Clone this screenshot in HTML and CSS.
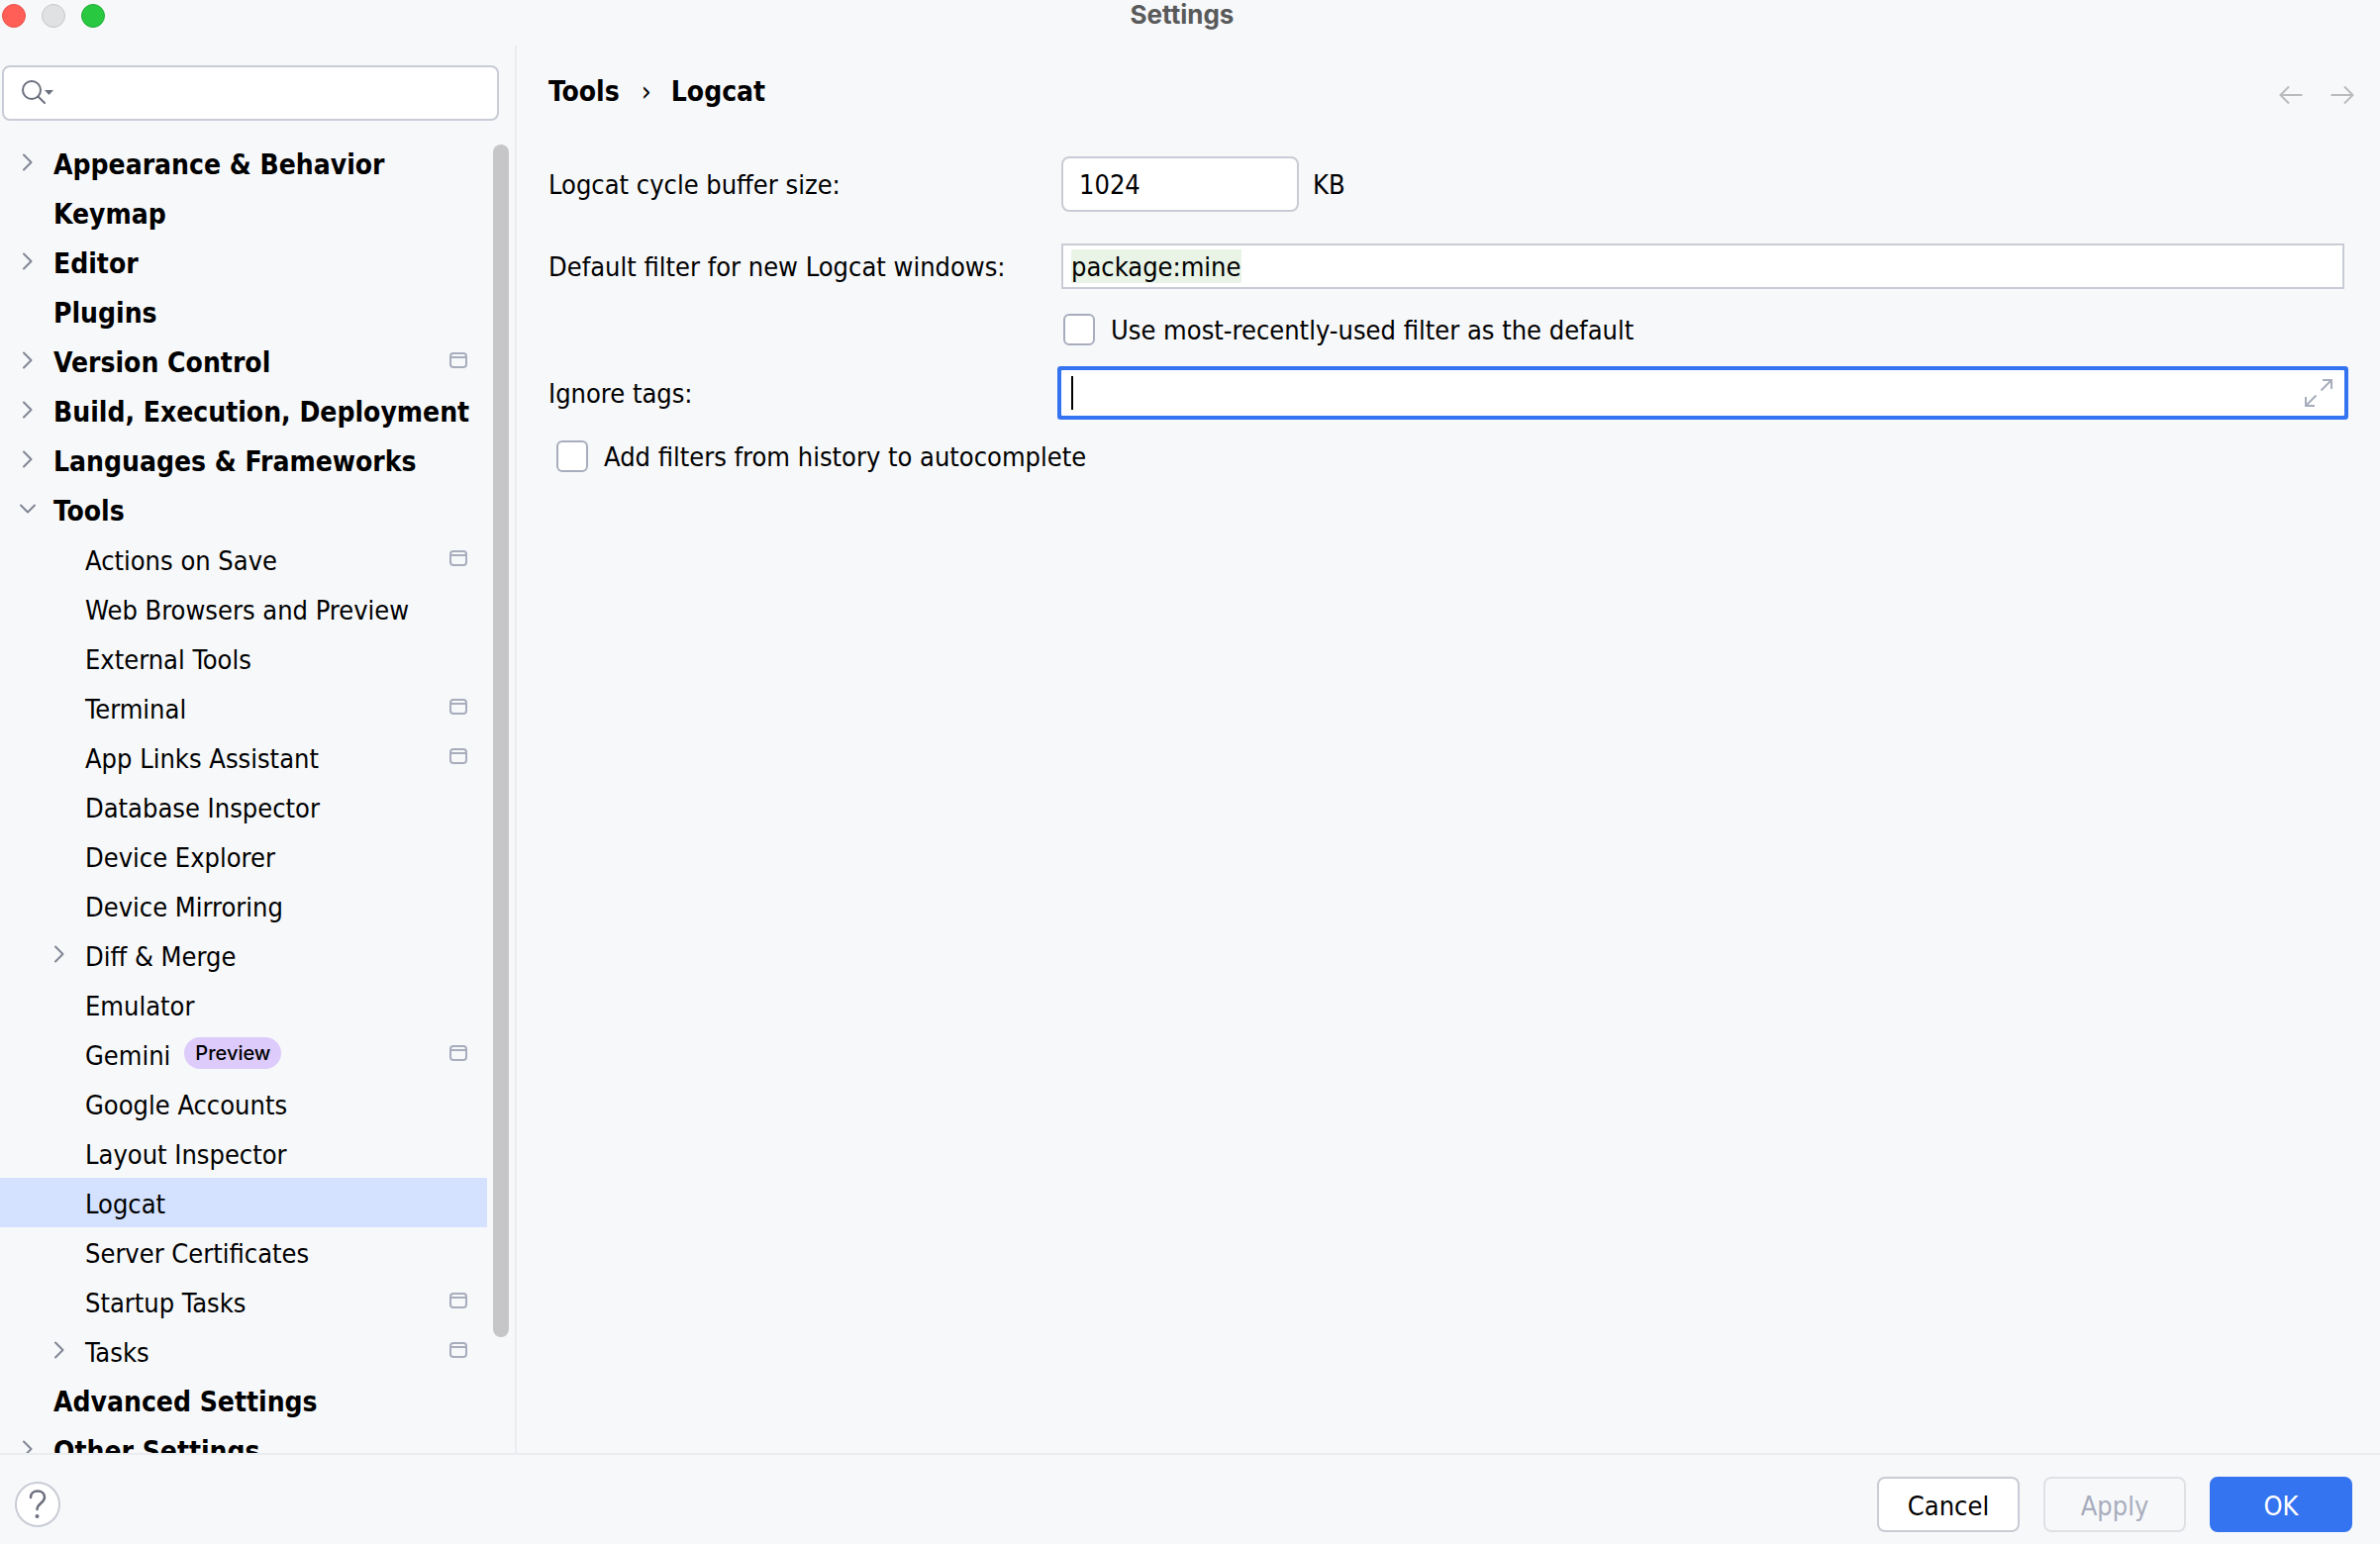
FILE: index.html
```html
<!DOCTYPE html>
<html lang="en">
<head>
<meta charset="utf-8">
<title>Settings</title>
<link rel="stylesheet" href="styles.css">
</head>
<body>
<svg class="sprite" aria-hidden="true">
  <symbol id="chevron-right" viewBox="0 0 32 32"><path d="M12 8.500 19.500 16l-7.500 7.500" fill="none" stroke="#818594" stroke-width="2" stroke-linecap="round" stroke-linejoin="round"/></symbol>
  <symbol id="chevron-down" viewBox="0 0 32 32"><path d="M9 12.500 16 19.500l7-7" fill="none" stroke="#818594" stroke-width="2" stroke-linecap="round" stroke-linejoin="round"/></symbol>
  <symbol id="project" viewBox="0 0 18 16"><rect x="1" y="1" width="16" height="14" rx="3" fill="none" stroke="#a8adbd" stroke-width="2"/><path d="M1 5h16" stroke="#a8adbd" stroke-width="2"/></symbol>
</svg>
<div class="window">
  <header class="titlebar">
    <div class="lights">
      <button class="light close" aria-label="Close"></button>
      <button class="light minimize" aria-label="Minimize"></button>
      <button class="light zoom" aria-label="Zoom"></button>
    </div>
    <h1 class="title">Settings</h1>
  </header>

  <div class="body">
    <aside class="sidebar">
      <label class="search">
        <svg class="search-icon" width="36" height="32" viewBox="0 0 36 32" aria-hidden="true"><circle cx="12" cy="12" r="9" fill="none" stroke="#6c707e" stroke-width="2"/><path d="m18.500 18.500 6.500 6.500" stroke="#6c707e" stroke-width="2" stroke-linecap="round"/><path d="M25 12h9l-4.500 5z" fill="#6c707e"/></svg>
        <input class="search-input" type="text" aria-label="Search settings">
      </label>
      <div class="tree-area">
        <nav class="tree" aria-label="Settings categories">
          <a class="row top" href="#"><svg class="chevron"><use href="#chevron-right"/></svg><span class="name">Appearance &amp; Behavior</span></a>
          <a class="row top" href="#"><span class="chevron"></span><span class="name">Keymap</span></a>
          <a class="row top" href="#"><svg class="chevron"><use href="#chevron-right"/></svg><span class="name">Editor</span></a>
          <a class="row top" href="#"><span class="chevron"></span><span class="name">Plugins</span></a>
          <a class="row top" href="#"><svg class="chevron"><use href="#chevron-right"/></svg><span class="name">Version Control</span><svg class="project"><use href="#project"/></svg></a>
          <a class="row top" href="#"><svg class="chevron"><use href="#chevron-right"/></svg><span class="name">Build, Execution, Deployment</span></a>
          <a class="row top" href="#"><svg class="chevron"><use href="#chevron-right"/></svg><span class="name">Languages &amp; Frameworks</span></a>
          <a class="row top" href="#"><svg class="chevron"><use href="#chevron-down"/></svg><span class="name">Tools</span></a>
          <a class="row child" href="#"><span class="chevron"></span><span class="name">Actions on Save</span><svg class="project"><use href="#project"/></svg></a>
          <a class="row child" href="#"><span class="chevron"></span><span class="name">Web Browsers and Preview</span></a>
          <a class="row child" href="#"><span class="chevron"></span><span class="name">External Tools</span></a>
          <a class="row child" href="#"><span class="chevron"></span><span class="name">Terminal</span><svg class="project"><use href="#project"/></svg></a>
          <a class="row child" href="#"><span class="chevron"></span><span class="name">App Links Assistant</span><svg class="project"><use href="#project"/></svg></a>
          <a class="row child" href="#"><span class="chevron"></span><span class="name">Database Inspector</span></a>
          <a class="row child" href="#"><span class="chevron"></span><span class="name">Device Explorer</span></a>
          <a class="row child" href="#"><span class="chevron"></span><span class="name">Device Mirroring</span></a>
          <a class="row child" href="#"><svg class="chevron"><use href="#chevron-right"/></svg><span class="name">Diff &amp; Merge</span></a>
          <a class="row child" href="#"><span class="chevron"></span><span class="name">Emulator</span></a>
          <a class="row child" href="#"><span class="chevron"></span><span class="name">Gemini</span><span class="badge">Preview</span><svg class="project"><use href="#project"/></svg></a>
          <a class="row child" href="#"><span class="chevron"></span><span class="name">Google Accounts</span></a>
          <a class="row child" href="#"><span class="chevron"></span><span class="name">Layout Inspector</span></a>
          <a class="row child selected" href="#" aria-current="page"><span class="chevron"></span><span class="name">Logcat</span></a>
          <a class="row child" href="#"><span class="chevron"></span><span class="name">Server Certificates</span></a>
          <a class="row child" href="#"><span class="chevron"></span><span class="name">Startup Tasks</span><svg class="project"><use href="#project"/></svg></a>
          <a class="row child" href="#"><svg class="chevron"><use href="#chevron-right"/></svg><span class="name">Tasks</span><svg class="project"><use href="#project"/></svg></a>
          <a class="row top" href="#"><span class="chevron"></span><span class="name">Advanced Settings</span></a>
          <a class="row top" href="#"><svg class="chevron"><use href="#chevron-right"/></svg><span class="name">Other Settings</span></a>
        </nav>
        <div class="scroll-track"><div class="scroll-thumb"></div></div>
      </div>
    </aside>

    <main class="content">
      <div class="page-head">
        <nav class="breadcrumb" aria-label="Breadcrumb">
          <a href="#">Tools</a><span class="sep">›</span><a href="#">Logcat</a>
        </nav>
        <div class="history">
          <button class="nav-button" aria-label="Back" disabled><svg width="24" height="20" viewBox="0 0 24 20"><path d="M23.500 10H1.500M10 1.500 1.500 10l8.500 8.500" fill="none" stroke="#b9bbbd" stroke-width="2"/></svg></button>
          <button class="nav-button" aria-label="Forward" disabled><svg width="24" height="20" viewBox="0 0 24 20"><path d="M.5 10h22M14 1.500l8.500 8.500-8.500 8.500" fill="none" stroke="#b9bbbd" stroke-width="2"/></svg></button>
        </div>
      </div>

      <form class="form">
        <div class="field-row size-row">
          <label class="field-label" for="buffer">Logcat cycle buffer size:</label>
          <input class="text-input" id="buffer" type="text" value="1024">
          <span class="unit">KB</span>
        </div>
        <div class="field-row">
          <label class="field-label" for="filter">Default filter for new Logcat windows:</label>
          <div class="editor">
            <input class="editor-input filter-value" id="filter" type="text" value="package:mine">
          </div>
        </div>
        <div class="check-row indented">
          <input class="check" id="recent" type="checkbox">
          <label for="recent">Use most-recently-used filter as the default</label>
        </div>
        <div class="field-row">
          <label class="field-label" for="ignore">Ignore tags:</label>
          <div class="editor focused">
            <span class="caret"></span>
            <input class="editor-input" id="ignore" type="text">
            <button class="expand" type="button" aria-label="Expand"><svg width="28" height="28" viewBox="0 0 28 28"><path d="M16.500 11.500 27 1M18 1h9v9M11.500 16.500 1 27M1 18v9h9" fill="none" stroke="#a8adbd" stroke-width="2"/></svg></button>
          </div>
        </div>
        <div class="check-row">
          <input class="check" id="history" type="checkbox">
          <label for="history">Add filters from history to autocomplete</label>
        </div>
      </form>
    </main>
  </div>

  <footer class="footer">
    <button class="help" aria-label="Help"><svg width="20" height="32" viewBox="0 0 20 32"><path d="M3 9c0-4 3-6.500 7-6.500s7 2.500 7 6.500c0 5.500-7.500 6-7.500 12" fill="none" stroke="#6c707e" stroke-width="2.500" stroke-linecap="round"/><circle cx="9.500" cy="28" r="2" fill="#6c707e"/></svg></button>
    <div class="actions">
      <button class="button">Cancel</button>
      <button class="button" disabled>Apply</button>
      <button class="button primary">OK</button>
    </div>
  </footer>
</div>
</body>
</html>
```

FILE: styles.css
```css
* { box-sizing: border-box; }

body {
  margin: 0;
  background: #f7f8fa;
  color: #000;
  font: 27px "DejaVu Sans Condensed", "DejaVu Sans", sans-serif;
}

button, input { margin: 0; padding: 0; border: 0; font: inherit; color: inherit; outline: none; }
a { color: inherit; text-decoration: none; }
.sprite { display: none; }

.window { display: flex; flex-direction: column; height: 100vh; overflow: hidden; }

.titlebar {
  display: grid;
  grid-template-columns: 1fr auto 1fr;
  flex: none;
  height: 46px;
  padding: 0 16px 0 0;
}
.lights { display: flex; gap: 16px; padding: 4px 2px; }
.light { width: 24px; height: 24px; border: 1px solid; border-radius: 50%; }
.close { background: #ff5f57; border-color: #e9524a; }
.minimize { background: #e0e1e2; border-color: #c6c7c9; }
.zoom { background: #28c840; border-color: #22ac36; }
.title { margin: 0; font: 700 26px/30px Inter, sans-serif; color: #595a5a; }

.body { display: flex; flex: 1; min-height: 0; border-bottom: 2px solid #ebecf0; }

.sidebar {
  display: flex;
  flex-direction: column;
  flex: none;
  width: 522px;
  border-right: 2px solid #ebecf0;
}
.search {
  display: flex;
  align-items: center;
  flex: none;
  height: 56px;
  margin: 20px 16px 18px 2px;
  padding: 2px 16px 0;
  background: #fff;
  border: 2px solid #c9ccd6;
  border-radius: 8px;
}
.search-icon { flex: none; }
.search-input { flex: 1; min-width: 0; background: transparent; }

.tree-area { display: flex; flex: 1; gap: 6px; min-height: 0; padding-right: 6px; }
.tree { flex: 1; min-width: 0; overflow: hidden; }
.row { display: flex; align-items: center; height: 50px; padding-right: 20px; white-space: nowrap; }
.top { padding-left: 12px; font-size: 28px; font-weight: 700; }
.child { padding-left: 44px; }
.selected { background: #d4e2ff; }
.chevron { flex: none; width: 32px; height: 32px; margin: 0 10px 2px 0; }
.name { padding-top: 2px; }
.project { flex: none; width: 18px; height: 16px; margin: 0 0 2px auto; }
.badge {
  margin: 0 0 2px 14px;
  padding: 0 11px;
  border-radius: 16px;
  background: #dccbfb;
  font: 500 20px/32px Inter, sans-serif;
}
.scroll-track { flex: none; width: 16px; padding: 6px 0 12px; }
.scroll-thumb { height: 92%; background: #c6c6c8; border-radius: 8px; }

.content { flex: 1; min-width: 0; padding: 28px 36px 0 32px; }
.page-head { display: flex; justify-content: space-between; margin-right: -10px; height: 84px; }
.breadcrumb { display: flex; gap: 20px; font-size: 28px; font-weight: 700; line-height: 38px; }
.sep { padding-left: 2px; font-weight: 400; }
.history { display: flex; gap: 28px; padding-top: 12px; height: 32px; }
.nav-button { display: flex; background: none; }

.form { display: flex; flex-direction: column; gap: 24px; }
.field-row { display: flex; align-items: center; }
.size-row { margin-bottom: 8px; }
.field-label { flex: none; width: 518px; }
.text-input {
  width: 240px;
  height: 56px;
  padding: 0 16px;
  background: #fff;
  border: 2px solid #c9ccd6;
  border-radius: 8px;
}
.unit { margin-left: 14px; }
.editor {
  display: flex;
  align-items: center;
  flex: 1;
  min-width: 0;
  height: 46px;
  padding: 0 10px 0 8px;
  background: #fff;
  border: 2px solid #c9ccd6;
}
.editor-input { flex: 1; min-width: 0; height: 34px; background: transparent; }
.filter-value { flex: none; width: 172px; background: #e9f4e7; }
.focused { border-color: #fff; box-shadow: 0 0 0 4px #3574f0; border-radius: 1px; }
.caret { width: 2px; height: 34px; background: #000; }
.expand { display: flex; background: none; }

.check-row { display: flex; align-items: center; gap: 16px; height: 34px; padding-left: 8px; }
.indented { padding-left: 520px; }
.check {
  appearance: none;
  width: 32px;
  height: 32px;
  background: #fff;
  border: 2px solid #a8adbd;
  border-radius: 6px;
}

.footer {
  display: flex;
  align-items: center;
  justify-content: space-between;
  flex: none;
  height: 90px;
  padding: 10px 28px 0 15px;
}
.help {
  display: flex;
  align-items: center;
  justify-content: center;
  width: 46px;
  height: 46px;
  background: #fff;
  border: 2px solid #c9ccd6;
  border-radius: 50%;
}
.actions { display: flex; gap: 24px; }
.button {
  width: 144px;
  height: 56px;
  padding-top: 2px;
  background: #fff;
  border: 2px solid #c9ccd6;
  border-radius: 8px;
}
.button:disabled { background: transparent; border-color: #dfe1e5; color: #a8adbd; }
.primary { background: #3574f0; border-color: #3574f0; color: #fff; }
```
